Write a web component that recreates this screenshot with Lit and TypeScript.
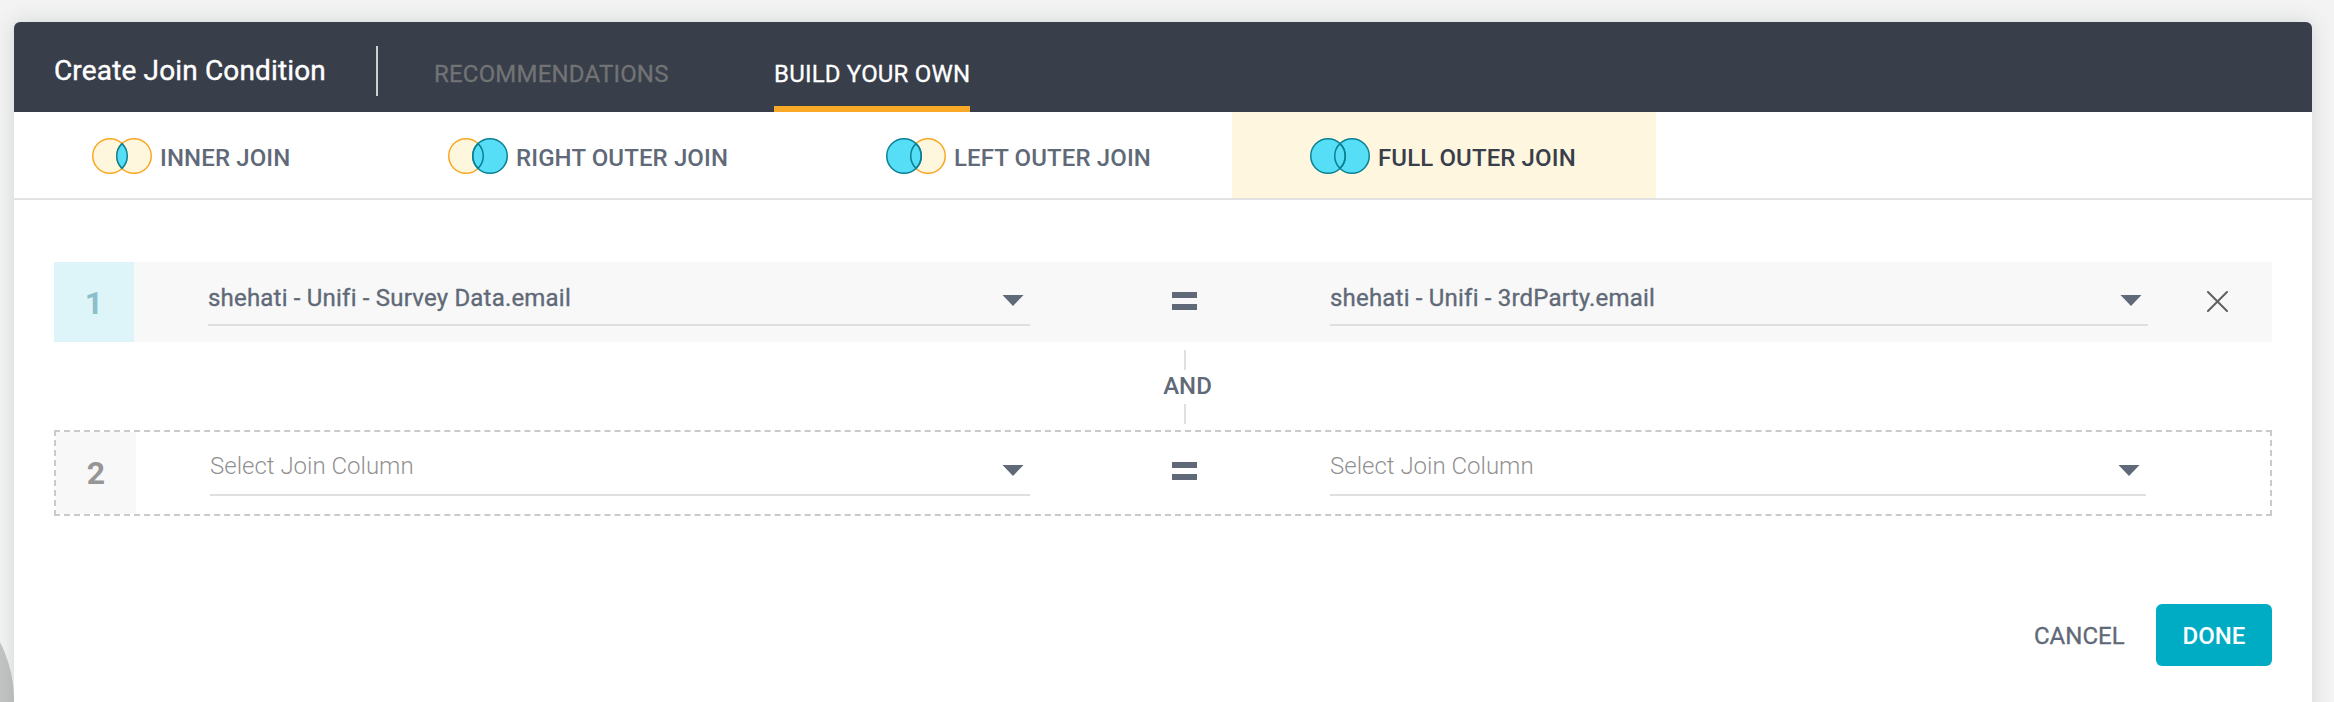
import { LitElement, html, svg, css } from "lit";
import { customElement, property } from "lit/decorators.js";
import { classMap } from "lit/directives/class-map.js";

type JoinKind = "inner" | "right" | "left" | "full";

@customElement("join-icon")
class JoinIcon extends LitElement {
  @property() kind: JoinKind = "inner";

  static styles = css`
    :host { display: block; width: 60px; height: 36px; }
    svg { display: block; }
    .plain { fill: #fff6de; stroke: #f9a825; stroke-width: 1.5; }
    .picked { fill: #56def6; stroke: #0a8094; stroke-width: 1.5; }
    .outline { fill: none; stroke: #0a8094; stroke-width: 1.5; }
  `;

  render() {
    const left = this.kind === "left" || this.kind === "full";
    const right = this.kind === "right" || this.kind === "full";
    const circle = (cx: number, on: boolean) =>
      svg`<circle class=${on ? "picked" : "plain"} cx=${cx} cy="18" r="17.25"></circle>`;
    const order = left ? [circle(42, right), circle(18, left)] : [circle(18, left), circle(42, right)];
    const lens = "M30 5.6 A17.25 17.25 0 0 1 30 30.4 A17.25 17.25 0 0 1 30 5.6 Z";
    return html`<svg width="60" height="36" viewBox="0 0 60 36">
      ${order}
      <path class=${this.kind === "inner" ? "picked" : "outline"} d=${lens}></path>
    </svg>`;
  }
}

@customElement("column-select")
class ColumnSelect extends LitElement {
  @property() value = "";

  static styles = css`
    :host { display: block; }
    .field {
      display: flex; justify-content: space-between; height: 100%; box-sizing: border-box;
      border-bottom: 2px solid #dfdfdf; padding-right: 6px;
      font: 400 24px/28px Roboto, sans-serif; letter-spacing: 0.2px; color: #606977;
      -webkit-text-stroke: 0.35px currentColor;
    }
    .empty { font-weight: 300; letter-spacing: 0; color: #929292; -webkit-text-stroke: 0; }
    .text { white-space: nowrap; padding-top: 4px; }
    .empty .text { padding-top: 2px; }
    svg { display: block; margin-top: 15px; }
  `;

  render() {
    return html`<div class=${classMap({ field: true, empty: !this.value })}>
      <span class="text">${this.value || "Select Join Column"}</span>
      <svg width="22" height="11" viewBox="0 0 22 11"><path d="M.5 0h21L11 11z" fill="#606977"></path></svg>
    </div>`;
  }
}

@customElement("app-root")
class AppRoot extends LitElement {
  private joins: { kind: JoinKind; label: string }[] = [
    { kind: "inner", label: "INNER JOIN" },
    { kind: "right", label: "RIGHT OUTER JOIN" },
    { kind: "left", label: "LEFT OUTER JOIN" },
    { kind: "full", label: "FULL OUTER JOIN" },
  ];

  static styles = css`
    :host {
      display: block; position: relative; height: 702px; overflow: hidden; box-sizing: border-box;
      padding: 22px 22px 0 14px; background: #f3f3f3; font-family: Roboto, sans-serif; color: #606977;
    }
    .disc {
      position: absolute; left: -240px; top: 573px; width: 254px; height: 254px;
      border-radius: 50%; background: #c4c4c4;
    }
    .card {
      position: relative; height: 720px; border-radius: 6px; background: #fff;
      box-shadow: 0 0 20px rgba(55, 71, 79, 0.17);
    }
    .head {
      display: flex; height: 90px; box-sizing: border-box; padding-left: 40px; background: #383e4a;
      border-radius: 6px 6px 0 0; color: #fff; white-space: nowrap;
    }
    .title {
      width: 322px; font-size: 28px; line-height: 32px; padding-top: 33px; letter-spacing: 0.15px;
      -webkit-text-stroke: 0.4px currentColor;
    }
    .rule { width: 2px; height: 50px; margin-top: 24px; background: #d0d0d0; }
    .tab {
      box-sizing: border-box; font-size: 24px; line-height: 28px; padding-top: 38px; letter-spacing: 0.2px;
      -webkit-text-stroke: 0.3px currentColor;
    }
    .muted { margin-left: 56px; width: 340px; color: #717374; }
    .current { width: 196px; border-bottom: 6px solid #faa926; }
    .joins { display: flex; height: 86px; border-bottom: 2px solid #e2e2e2; }
    .join {
      display: flex; box-sizing: border-box; padding: 26px 0 0 78px; gap: 8px;
      font-weight: 500; font-size: 24px; line-height: 28px; letter-spacing: 0.12px; white-space: nowrap;
    }
    .join span { padding-top: 6px; }
    .inner { width: 356px; }
    .right { width: 438px; }
    .left { width: 424px; }
    .full { width: 424px; background: #fef6df; color: #383e4a; }
    .rows { padding: 62px 40px 0; }
    .row {
      display: grid; grid-template-columns: 154px 822px 300px 818px 1fr;
      height: 80px; background: #f8f8f8;
    }
    .num {
      display: flex; align-items: center; justify-content: center; font-size: 32px; font-weight: 700;
      box-sizing: border-box; padding-top: 2px; background: #ddf5f8; color: #8dbfca; width: 80px;
    }
    .row column-select { height: 46px; margin-top: 18px; }
    .eq { display: flex; flex-direction: column; gap: 6px; padding: 30px 0 0 142px; }
    .eq i { width: 25px; height: 6px; background: #606977; }
    .close { padding: 29px 0 0 59px; }
    .close svg { display: block; }
    .draft {
      height: 86px; box-sizing: border-box; border: 2px dashed #cacaca; background: #fff;
      grid-template-columns: 154px 820px 300px 816px 1fr;
    }
    .draft .num { background: #f8f8f8; color: #969696; padding-top: 0; }
    .and {
      display: flex; flex-direction: column; align-items: center; width: 49px; height: 88px;
      box-sizing: border-box; margin-left: 1109px; padding-top: 8px; font-weight: 500; font-size: 24px;
    }
    .and b { font-weight: 500; line-height: 32px; padding-bottom: 2px; }
    .and i { width: 2px; height: 20px; margin-right: 5px; background: #e0e0e0; }
    .foot { display: flex; justify-content: flex-end; padding: 88px 40px 0 0; font-size: 24px; line-height: 64px; }
    .cancel { width: 122px; -webkit-text-stroke: 0.3px currentColor; }
    .done {
      width: 116px; height: 62px; border-radius: 6px; background: #00acc4; color: #fff;
      text-align: center; font-weight: 500;
    }
  `;

  private equals() {
    return html`<div class="eq"><i></i><i></i></div>`;
  }

  render() {
    return html`
      <div class="disc"></div>
      <div class="card">
        <div class="head">
          <div class="title">Create Join Condition</div>
          <div class="rule"></div>
          <div class="tab muted">RECOMMENDATIONS</div>
          <div class="tab current">BUILD YOUR OWN</div>
        </div>
        <div class="joins">
          ${this.joins.map((j) => html`<div class="join ${j.kind}"><join-icon .kind=${j.kind}></join-icon><span>${j.label}</span></div>`)}
        </div>
        <div class="rows">
          <div class="row">
            <div class="num">1</div>
            <column-select value="shehati - Unifi - Survey Data.email"></column-select>
            ${this.equals()}
            <column-select value="shehati - Unifi - 3rdParty.email"></column-select>
            <div class="close">
              <svg width="21" height="21" viewBox="0 0 21 21"><path d="M1 1L20 20M20 1L1 20" stroke="#606060" stroke-width="2" stroke-linecap="round"></path></svg>
            </div>
          </div>
          <div class="and"><i></i><b>AND</b><i></i></div>
          <div class="row draft">
            <div class="num">2</div>
            <column-select></column-select>
            ${this.equals()}
            <column-select></column-select>
          </div>
        </div>
        <div class="foot">
          <div class="cancel">CANCEL</div>
          <div class="done">DONE</div>
        </div>
      </div>
    `;
  }
}
